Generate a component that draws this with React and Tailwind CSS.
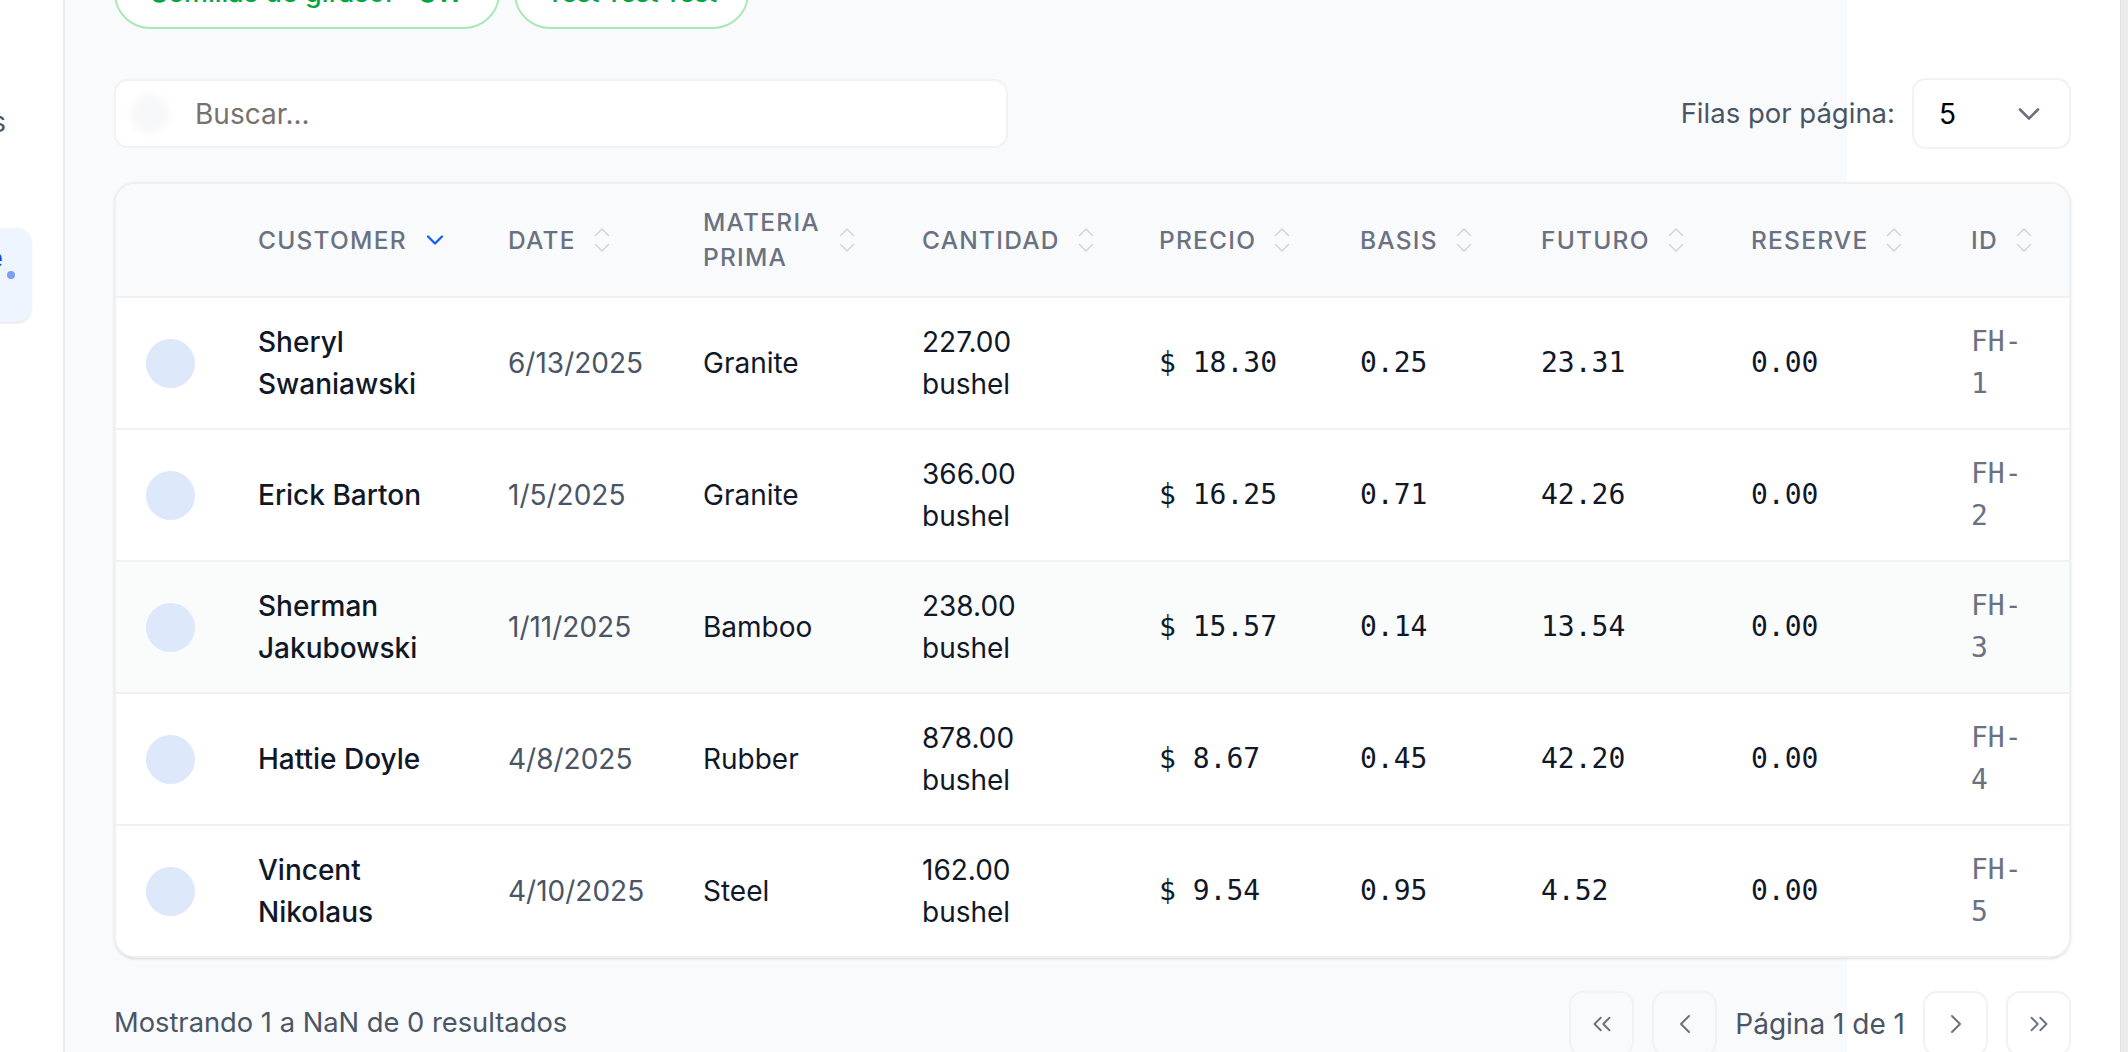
import React from "react";
import {
  ChevronDown,
  ChevronsLeft,
  ChevronLeft,
  ChevronRight,
  ChevronsRight,
} from "lucide-react";

const rows = [
  { name: "Sheryl Swaniawski", date: "6/13/2025", material: "Granite", qty: "227.00", price: "$ 18.30", basis: "0.25", futuro: "23.31", reserve: "0.00", id: "FH-1" },
  { name: "Erick Barton", date: "1/5/2025", material: "Granite", qty: "366.00", price: "$ 16.25", basis: "0.71", futuro: "42.26", reserve: "0.00", id: "FH-2" },
  { name: "Sherman Jakubowski", date: "1/11/2025", material: "Bamboo", qty: "238.00", price: "$ 15.57", basis: "0.14", futuro: "13.54", reserve: "0.00", id: "FH-3" },
  { name: "Hattie Doyle", date: "4/8/2025", material: "Rubber", qty: "878.00", price: "$ 8.67", basis: "0.45", futuro: "42.20", reserve: "0.00", id: "FH-4" },
  { name: "Vincent Nikolaus", date: "4/10/2025", material: "Steel", qty: "162.00", price: "$ 9.54", basis: "0.95", futuro: "4.52", reserve: "0.00", id: "FH-5" },
];

const columns = ["Date", "Materia prima", "Cantidad", "Precio", "Basis", "Futuro", "Reserve", "ID"];

// up/down sort arrows, drawn apart like the original
function SortArrows() {
  return (
    <svg width="16" height="26" viewBox="0 0 16 26" fill="none" className="shrink-0 text-gray-300">
      <path d="M1.5 8.5 8 2l6.5 6.5" stroke="currentColor" strokeWidth="1.5" strokeLinecap="round" strokeLinejoin="round" />
      <path d="M1.5 17.5 8 24l6.5-6.5" stroke="currentColor" strokeWidth="1.5" strokeLinecap="round" strokeLinejoin="round" />
    </svg>
  );
}

function SortHeader({ label, active }) {
  return (
    <div className={"flex items-center " + (active ? "gap-[14px]" : "gap-[18px]")}>
      <span>{label}</span>
      {active ? <ChevronDown size={28} strokeWidth={2} className="shrink-0 text-blue-600" /> : <SortArrows />}
    </div>
  );
}

function PageButton({ children }) {
  return (
    <button className="flex h-[65px] w-[65px] items-center justify-center rounded-[14px] border-2 border-[#f1f2f4] text-gray-500">
      {children}
    </button>
  );
}

export default function App() {
  const mono = "font-['DejaVu_Sans_Mono',monospace] text-[28px] leading-[42px]";
  const th = "pl-[32px] pr-[35px] py-[21px] text-left align-middle text-[24.5px] leading-[35px] font-medium uppercase tracking-wider text-gray-500";
  const td = "pl-[32px] pr-[35px] py-[23px] align-middle";

  return (
    <div className="flex h-[1052px] w-[2128px] overflow-hidden bg-white font-['Inter',sans-serif]">
      {/* sidebar, mostly scrolled out of view */}
      <aside className="w-[65px] shrink-0 overflow-hidden border-r-2 border-[#ececec] bg-white">
        <div className="ml-[-240px] mt-[101px] w-[246px] text-right text-[28px] leading-[42px] text-gray-600 whitespace-nowrap">
          Reportes
        </div>
        <div className="ml-[-240px] mt-[85px] flex h-[94px] w-[271px] items-center justify-end rounded-r-[14px] bg-[#eff5ff] pr-[16px] shadow-sm">
          <span className="mb-[34px] whitespace-nowrap text-[28px] leading-[42px] font-medium text-blue-700">Base</span>
          <span className="ml-[4px] h-[8px] w-[8px] shrink-0 rounded-full bg-[#7d9cf3]" />
        </div>
      </aside>

      <main className="flex min-w-0 flex-1 flex-col bg-[linear-gradient(to_right,#f9fafb_1782px,#ffffff_1782px)] px-[49px]">
        {/* tabs */}
        <div className="mt-[-43px] flex shrink-0 gap-[14px]">
          <div className="w-[386px] rounded-full border-2 border-[#a8e9b8] bg-white py-[13px] text-center text-[27px] leading-[42px] font-medium text-green-600 whitespace-nowrap">
            Semillas de girasol - SW
          </div>
          <div className="w-[235px] rounded-full border-2 border-[#a8e9b8] bg-white py-[13px] text-center text-[27px] leading-[42px] font-medium tracking-tight text-green-600 whitespace-nowrap">
            Test Test Test
          </div>
        </div>

        {/* search + rows per page */}
        <div className="mt-[49px] flex shrink-0 items-center justify-between">
          <div className="flex h-[69px] w-[894px] items-center gap-[25px] rounded-[14px] border-2 border-[#f1f2f4] bg-white pl-[14px]">
            <div className="h-[40px] w-[40px] shrink-0 rounded-full bg-gray-100 opacity-60 blur-[3px]" />
            <input
              placeholder="Buscar..."
              className="flex-1 bg-transparent text-[28px] text-gray-900 outline-none placeholder:text-[#78716c]"
            />
          </div>
          <div className="flex items-center gap-[17px]">
            <span className="text-[27.5px] text-gray-600">Filas por página:</span>
            <div className="flex h-[71px] w-[159px] items-center justify-between rounded-[14px] border-2 border-[#f1f2f4] bg-white pl-[25px] pr-[22px]">
              <span className="text-[28px] text-black">5</span>
              <ChevronDown size={36} strokeWidth={1.75} className="text-gray-500" />
            </div>
          </div>
        </div>

        {/* table */}
        <div className="mt-[33px] shrink-0 overflow-hidden rounded-[21px] border-2 border-[#eff0f2] bg-white shadow-sm">
          <table className="w-full table-fixed border-collapse">
            <colgroup>
              <col className="w-[110px]" />
              <col className="w-[250px]" />
              <col className="w-[195px]" />
              <col className="w-[219px]" />
              <col className="w-[237px]" />
              <col className="w-[201px]" />
              <col className="w-[181px]" />
              <col className="w-[210px]" />
              <col className="w-[220px]" />
              <col />
            </colgroup>
            <thead className="bg-gray-50">
              <tr className="border-b-2 border-[#f0f1f3]">
                <th className="py-[21px]" />
                <th className={th}>
                  <SortHeader label="Customer" active />
                </th>
                {columns.map((c) => (
                  <th key={c} className={th}>
                    <SortHeader label={c} />
                  </th>
                ))}
              </tr>
            </thead>
            <tbody>
              {rows.map((r, i) => (
                <tr
                  key={r.id}
                  className={
                    (i < rows.length - 1 ? "border-b-2 border-[#f0f1f3] " : "") +
                    (i === 2 ? "bg-[#fafbfb]" : "bg-white")
                  }
                >
                  <td className="py-[23px] pl-[30px] align-middle">
                    <div className="h-[49px] w-[49px] rounded-full bg-[#dde8fb]" />
                  </td>
                  <td className={`${td} text-[28px] leading-[42px] font-medium text-gray-900`}>{r.name}</td>
                  <td className={`${td} text-[28px] leading-[42px] text-gray-600`}>{r.date}</td>
                  <td className={`${td} text-[28px] leading-[42px] text-gray-900`}>{r.material}</td>
                  <td className={`${td} text-[28px] leading-[42px] text-gray-900`}>{r.qty} bushel</td>
                  <td className={`${td} text-gray-900 ${mono}`}>{r.price}</td>
                  <td className={`${td} text-gray-900 ${mono}`}>{r.basis}</td>
                  <td className={`${td} text-gray-900 ${mono}`}>{r.futuro}</td>
                  <td className={`${td} text-gray-900 ${mono}`}>{r.reserve}</td>
                  <td className={`${td} text-gray-500 ${mono}`}>{r.id}</td>
                </tr>
              ))}
            </tbody>
          </table>
        </div>

        {/* pagination */}
        <div className="mt-[33px] flex shrink-0 items-center justify-between">
          <span className="text-[27.3px] text-gray-600">Mostrando 1 a NaN de 0 resultados</span>
          <div className="flex items-center gap-[18px]">
            <PageButton>
              <ChevronsLeft size={30} strokeWidth={1.5} />
            </PageButton>
            <PageButton>
              <ChevronLeft size={32} strokeWidth={1.5} />
            </PageButton>
            <span className="text-[28px] text-gray-600">Página 1 de 1</span>
            <PageButton>
              <ChevronRight size={32} strokeWidth={1.5} />
            </PageButton>
            <PageButton>
              <ChevronsRight size={30} strokeWidth={1.5} />
            </PageButton>
          </div>
        </div>
      </main>

      {/* scrollbar track */}
      <div className="w-[8px] shrink-0 border-l border-[#e2e2e2] bg-[#ebebeb]" />
    </div>
  );
}
